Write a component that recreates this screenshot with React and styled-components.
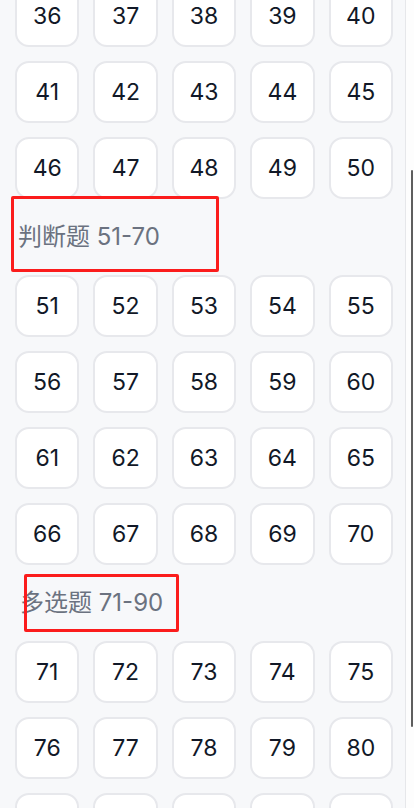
import React, { useLayoutEffect, useRef } from "react";
import styled, { createGlobalStyle } from "styled-components";

const GlobalStyle = createGlobalStyle`
  html, body {
    margin: 0;
    padding: 0;
    height: 100%;
    overflow: hidden;
  }
  body {
    font-family: "Inter", "Noto Sans CJK SC", sans-serif;
    background: #ffffff;
  }
`;

const Page = styled.div`
  display: flex;
  width: 414px;
  height: 808px;
`;

const Sidebar = styled.div`
  position: relative;
  width: 405px;
  height: 808px;
  flex-shrink: 0;
  background-color: #f7f8fa;
  border-right: 1px solid #e6e7ea;
  overflow-y: auto;
  scrollbar-width: none;
  &::-webkit-scrollbar {
    display: none;
  }
`;

const Main = styled.div`
  flex: 1;
  background-color: #fdfdfd;
  display: flex;
  flex-direction: column;
  align-items: flex-end;
  padding-top: 170px;
`;

const Thumb = styled.div`
  width: 2px;
  height: 557px;
  margin-right: 1px;
  border-radius: 1px;
  background-color: #5e5e5e;
`;

const Section = styled.section`
  display: flex;
  flex-direction: column;
`;

const Title = styled.h3`
  position: relative;
  margin: 20px 0 20px;
  padding-left: ${(p) => p.$indent}px;
  height: 36px;
  line-height: 36px;
  font-size: 24px;
  font-weight: 400;
  color: #6b7280;
  font-family: "Inter", "Noto Sans CJK SC", sans-serif;
`;

const Mark = styled.div`
  position: absolute;
  box-sizing: border-box;
  border: 3px solid #fb1c1c;
  border-radius: 2px;
  pointer-events: none;
`;

const Grid = styled.div`
  display: grid;
  grid-template-columns: repeat(5, 1fr);
  gap: 14px;
  padding: 0 12px 0 15px;
`;

const NumButton = styled.button`
  height: 62px;
  border: 2px solid #e7e8ec;
  border-radius: 14px;
  background-color: #ffffff;
  color: #111827;
  font-family: "Inter", sans-serif;
  font-size: 23px;
  font-weight: 400;
  padding: 0;
  cursor: pointer;
`;

const sections = [
  { name: "单选题", from: 1, to: 50, indent: 18 },
  { name: "判断题", from: 51, to: 70, indent: 18, mark: { left: 11, top: -23, width: 208, height: 76 } },
  { name: "多选题", from: 71, to: 90, indent: 20, mark: { left: 24, top: -11, width: 155, height: 58 } },
];

const range = (a, b) => Array.from({ length: b - a + 1 }, (_, i) => a + i);

export default function App() {
  const listRef = useRef(null);
  const anchorRef = useRef(null);

  useLayoutEffect(() => {
    // scroll so that the 36-40 row sits partly above the top edge
    if (listRef.current && anchorRef.current) {
      listRef.current.scrollTop = anchorRef.current.offsetTop + 15;
    }
  }, []);

  return (
    <>
      <GlobalStyle />
      <Page>
        <Sidebar ref={listRef}>
          {sections.map((s) => (
            <Section key={s.name}>
              <Title $indent={s.indent}>
                {s.name} {s.from}-{s.to}
                {s.mark && <Mark style={s.mark} />}
              </Title>
              <Grid>
                {range(s.from, s.to).map((n) => (
                  <NumButton key={n} ref={n === 36 ? anchorRef : undefined}>
                    {n}
                  </NumButton>
                ))}
              </Grid>
            </Section>
          ))}
          <div style={{ height: 20 }} />
        </Sidebar>
        <Main>
          <Thumb />
        </Main>
      </Page>
    </>
  );
}
